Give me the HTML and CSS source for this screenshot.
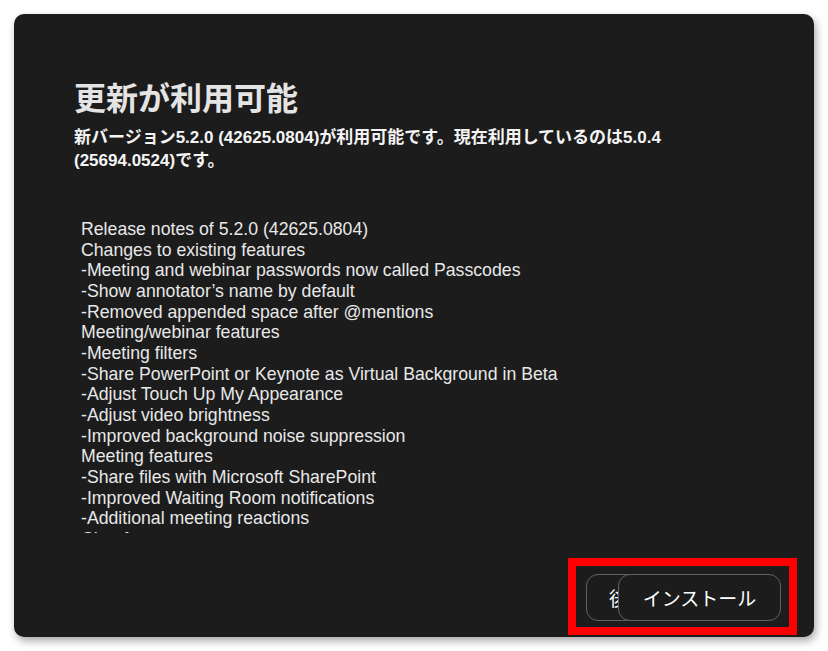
FILE: index.html
```html
<!DOCTYPE html>
<html lang="ja">
<head>
    <meta charset="UTF-8">
    <meta name="viewport" content="width=device-width, initial-scale=1.0">
    <title>更新が利用可能</title>
    <link rel="stylesheet" href="styles.css">
</head>
<body>
    <div class="dialog">
        <h1 class="title">更新が利用可能</h1>
        <p class="subtitle">新バージョン5.2.0 (42625.0804)が利用可能です。現在利用しているのは5.0.4 (25694.0524)です。</p>
        <div class="notes">
            <div>Release notes of 5.2.0 (42625.0804)</div>
            <div>Changes to existing features</div>
            <div>-Meeting and webinar passwords now called Passcodes</div>
            <div>-Show annotator’s name by default</div>
            <div>-Removed appended space after @mentions</div>
            <div>Meeting/webinar features</div>
            <div>-Meeting filters</div>
            <div>-Share PowerPoint or Keynote as Virtual Background in Beta</div>
            <div>-Adjust Touch Up My Appearance</div>
            <div>-Adjust video brightness</div>
            <div>-Improved background noise suppression</div>
            <div>Meeting features</div>
            <div>-Share files with Microsoft SharePoint</div>
            <div>-Improved Waiting Room notifications</div>
            <div>-Additional meeting reactions</div>
            <div>Chat features</div>
            <div>-Jump to unread messages</div>
        </div>
        <div class="actions">
            <button class="btn btn-later">後で</button>
            <button class="btn btn-install">インストール</button>
        </div>
    </div>
</body>
</html>
```
FILE: styles.css
```css
body {
    margin: 0;
    background: #ffffff;
    font-family: "Liberation Sans", "Noto Sans CJK JP", sans-serif;
}
.dialog {
    margin: 14px;
    width: 800px;
    height: 623px;
    box-sizing: border-box;
    padding: 0 17px 2px 60px;
    background: #1c1c1c;
    border-radius: 10px;
    box-shadow: 2px 4px 9px rgba(0, 0, 0, 0.35);
    display: flex;
    flex-direction: column;
    color: #ececec;
}
.title {
    margin: 63px 0 0;
    font-family: "Noto Sans CJK JP", sans-serif;
    font-size: 32px;
    line-height: 38px;
    font-weight: 700;
    color: #e4e4e4;
}
.subtitle {
    margin: 11px 0 0;
    width: 620px;
    font-size: 17px;
    line-height: 23px;
    font-weight: 700;
    color: #f4f4f4;
}
.notes {
    margin-top: 47px;
    padding-left: 7px;
    height: 314px;
    overflow: hidden;
    font-size: 17.7px;
    line-height: 20.65px;
    color: #e8e8e8;
}
.actions {
    margin-top: auto;
    align-self: flex-end;
    display: flex;
    border: 8px solid #ff0000;
    padding: 8px 8px 6px 10px;
}
.btn {
    height: 47px;
    border: 1.5px solid #626262;
    border-radius: 12px;
    background: #1c1c1c;
    color: #ffffff;
    font-family: "Noto Sans CJK JP", sans-serif;
    font-size: 19px;
}
.btn-later {
    width: 90px;
    padding: 0 0 0 22px;
    text-align: left;
}
.btn-install {
    width: 163px;
    margin-left: -58px;
}
```
